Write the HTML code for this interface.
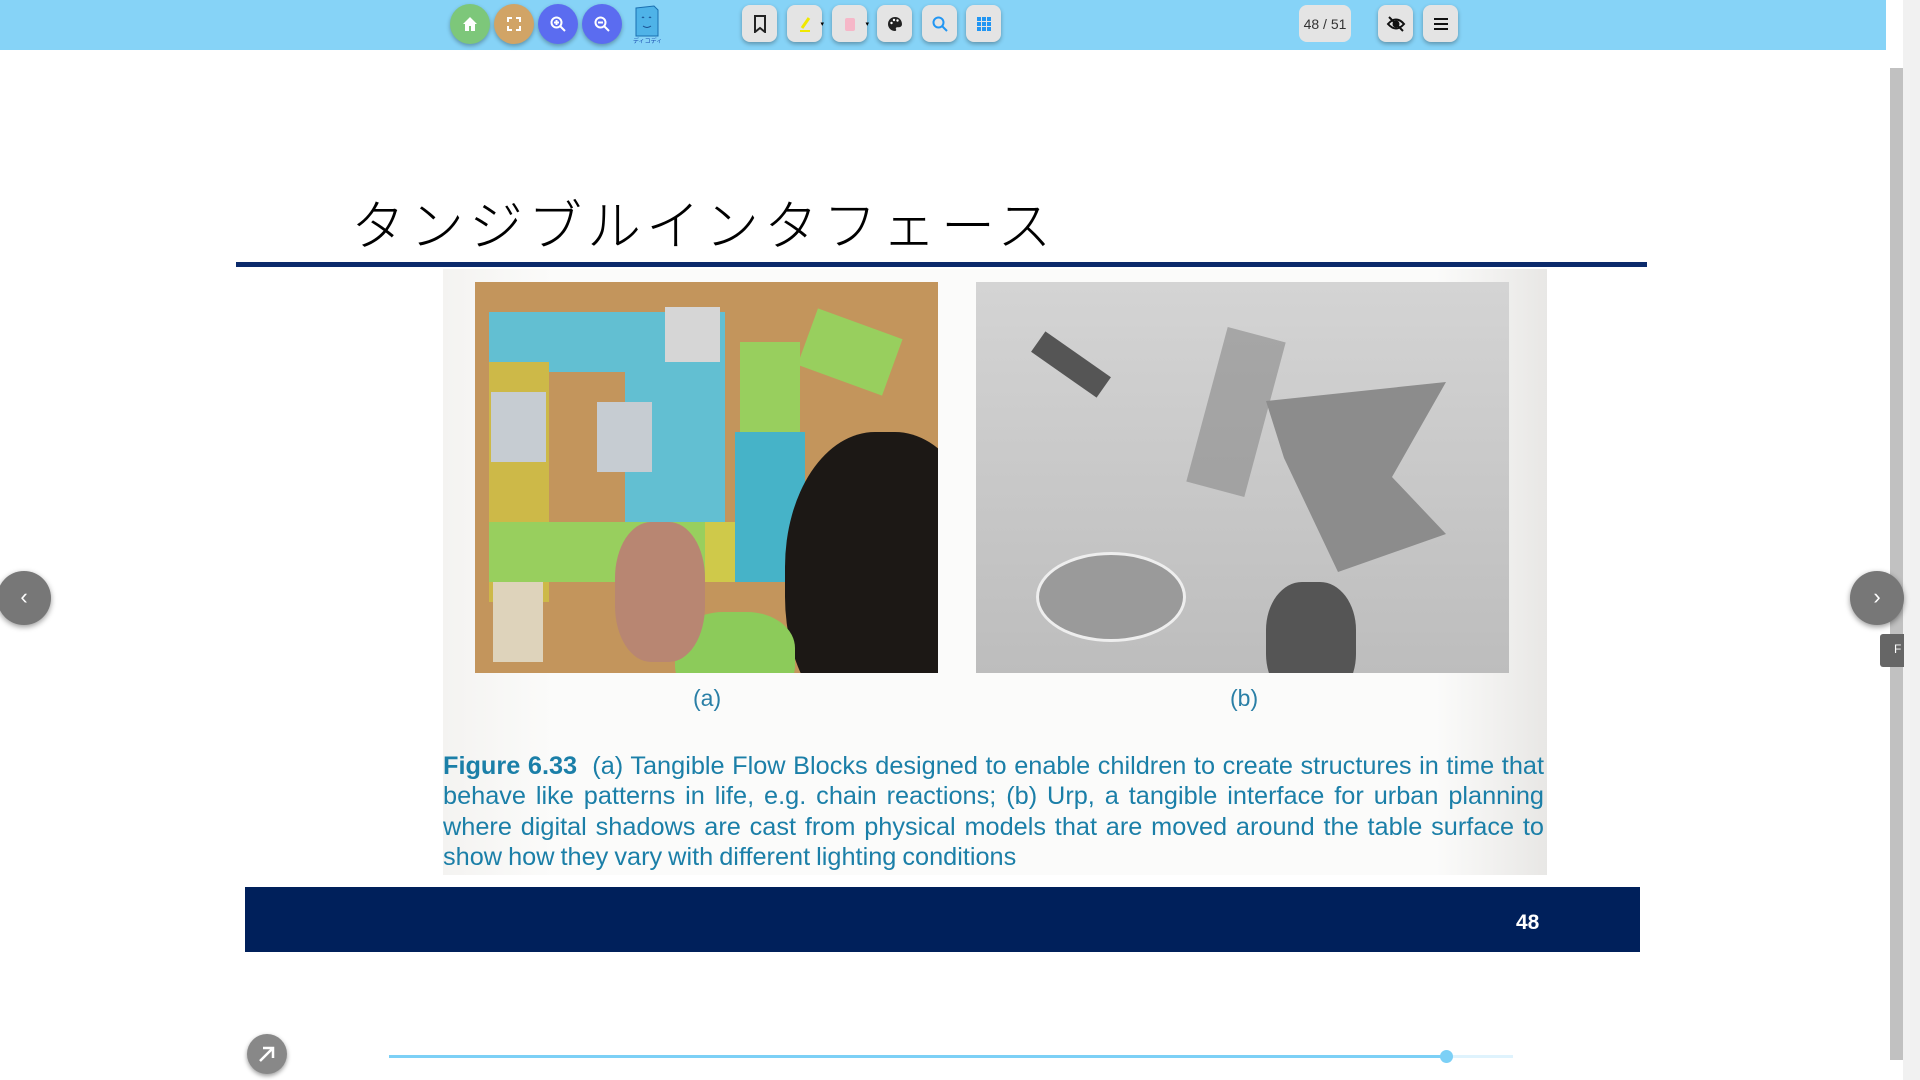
<!DOCTYPE html>
<html><head><meta charset="utf-8"><style>
*{margin:0;padding:0;box-sizing:border-box}
body{width:1920px;height:1080px;background:#fff;position:relative;overflow:hidden;font-family:"Liberation Sans","Noto Sans CJK JP",sans-serif}
.tb{position:absolute;left:0;top:0;width:1886px;height:50px;background:#86d3f7}
.c{position:absolute;top:4px;width:40px;height:40px;border-radius:50%;box-shadow:0 2px 4px rgba(0,0,0,.3);display:flex;align-items:center;justify-content:center}
.s{position:absolute;top:5px;width:35px;height:37px;border-radius:8px;background:#e4e4e4;box-shadow:0 2px 4px rgba(0,0,0,.3);display:flex;align-items:center;justify-content:center}
.abs{position:absolute}
</style></head><body>
<div class="abs" style="left:1886px;top:0;width:34px;height:1080px;background:#fff"></div>
<div class="abs" style="left:1903px;top:0;width:17px;height:1080px;background:#f1f1f1"></div>
<div class="abs" style="left:1890px;top:68px;width:13px;height:992px;background:#c1c1c1"></div>
<div class="tb">
 <div class="c" style="left:450px;background:#7dc77a"><svg width="18" height="18" viewBox="0 0 18 18"><path d="M9 2L2 9h2v7h4v-5h2v5h4V9h2z" fill="#fff"/></svg></div>
 <div class="c" style="left:494px;background:#d1a466"><svg width="16" height="16" viewBox="0 0 16 16" fill="none" stroke="#fff" stroke-width="2"><path d="M2 6V2h4M10 2h4v4M14 10v4h-4M6 14H2v-4"/></svg></div>
 <div class="c" style="left:538px;background:#5b6cf0"><svg width="18" height="18" viewBox="0 0 18 18" fill="none" stroke="#fff" stroke-width="2"><circle cx="7.5" cy="7.5" r="5"/><path d="M11 11l5 5M5 7.5h5M7.5 5v5"/></svg></div>
 <div class="c" style="left:582px;background:#5b6cf0"><svg width="18" height="18" viewBox="0 0 18 18" fill="none" stroke="#fff" stroke-width="2"><circle cx="7.5" cy="7.5" r="5"/><path d="M11 11l5 5M5 7.5h5"/></svg></div>
 <div class="abs" style="left:632px;top:4px;width:30px;height:40px"><svg width="30" height="40" viewBox="0 0 30 40"><path d="M4 4l18-2 4 4v26H4z" fill="#4fb3e8" stroke="#1a6fb0"/><path d="M10 14q1-2 2 0M17 14q1-2 2 0M11 22q4 3 8 0" stroke="#1a4f90" fill="none"/><text x="1" y="39" font-size="6" fill="#1a4fb0">ディコディコ</text></svg></div>
 <div class="s" style="left:742px"><svg width="14" height="18" viewBox="0 0 14 18"><path d="M2 1h10v16l-5-4-5 4z" fill="none" stroke="#222" stroke-width="2"/></svg></div>
 <div class="s" style="left:787px"><svg width="14" height="18"><path d="M4 13l7-10" stroke="#f0e800" stroke-width="3"/><path d="M2 16h10" stroke="#f0e800" stroke-width="2"/></svg><span style="position:absolute;right:-2px;top:15px;font-size:7px">▾</span></div>
 <div class="s" style="left:832px"><svg width="12" height="16"><rect x="1" y="2" width="10" height="13" rx="2" fill="#f6b7c8"/></svg><span style="position:absolute;right:-2px;top:15px;font-size:7px">▾</span></div>
 <div class="s" style="left:877px"><svg width="18" height="18" viewBox="0 0 18 18"><path d="M9 2a7 7 0 0 0 0 14c1 0 1.5-.8 1-1.7-.5-1 0-2 1.2-2H13a3 3 0 0 0 3-3C16 5 13 2 9 2z" fill="#222"/><circle cx="5.5" cy="8" r="1.2" fill="#fff"/><circle cx="8" cy="5" r="1.2" fill="#fff"/><circle cx="11.5" cy="5.5" r="1.2" fill="#fff"/></svg></div>
 <div class="s" style="left:922px"><svg width="18" height="18" fill="none" stroke="#2196f3" stroke-width="2"><circle cx="7.5" cy="7.5" r="5"/><path d="M11 11l5 5"/></svg></div>
 <div class="s" style="left:966px"><svg width="16" height="16" fill="#2196f3"><rect x="1" y="1" width="4" height="4"/><rect x="6" y="1" width="4" height="4"/><rect x="11" y="1" width="4" height="4"/><rect x="1" y="6" width="4" height="4"/><rect x="6" y="6" width="4" height="4"/><rect x="11" y="6" width="4" height="4"/><rect x="1" y="11" width="4" height="4"/><rect x="6" y="11" width="4" height="4"/><rect x="11" y="11" width="4" height="4"/></svg></div>
 <div class="s" style="left:1299px;width:52px;font-size:14px;color:#333;box-shadow:none">48 / 51</div>
 <div class="s" style="left:1378px"><svg width="20" height="18" viewBox="0 0 20 18" fill="none" stroke="#111" stroke-width="2"><path d="M2 9q8-9 16 0q-8 9-16 0z"/><circle cx="10" cy="9" r="2.5" fill="#111"/><path d="M3 2l14 14"/></svg></div>
 <div class="s" style="left:1423px"><svg width="16" height="14" fill="#111"><rect x="1" y="1" width="14" height="2"/><rect x="1" y="6" width="14" height="2"/><rect x="1" y="11" width="14" height="2"/></svg></div>
</div>

<div class="abs" style="left:351px;top:190px;font-size:54px;letter-spacing:5px;color:#000;font-family:'Noto Sans CJK JP',sans-serif;font-weight:300;line-height:64px">タンジブルインタフェース</div>
<div class="abs" style="left:236px;top:262px;width:1411px;height:5px;background:#0b2a6b"></div>

<div class="abs" style="left:443px;top:269px;width:1104px;height:606px;background:linear-gradient(90deg,#f4f3f1,#fbfbfa 10%,#fbfbfa 90%,#e8e7e5)"></div>
<div class="abs" style="left:475px;top:282px;width:463px;height:391px;background:#c3955c;overflow:hidden">
 <div class="abs" style="left:14px;top:30px;width:200px;height:60px;background:#62bfd2"></div>
 <div class="abs" style="left:150px;top:30px;width:100px;height:240px;background:#62bfd2"></div>
 <div class="abs" style="left:14px;top:80px;width:60px;height:240px;background:#cdb948"></div>
 <div class="abs" style="left:14px;top:240px;width:300px;height:60px;background:#98cf5e"></div>
 <div class="abs" style="left:230px;top:240px;width:100px;height:60px;background:#cfc94a"></div>
 <div class="abs" style="left:265px;top:60px;width:60px;height:240px;background:#98cf5e"></div>
 <div class="abs" style="left:260px;top:150px;width:70px;height:150px;background:#46b3c8"></div>
 <div class="abs" style="left:330px;top:40px;width:90px;height:60px;background:#98cf5e;transform:rotate(20deg)"></div>
 <div class="abs" style="left:16px;top:110px;width:55px;height:70px;background:#c6ccd2"></div>
 <div class="abs" style="left:122px;top:120px;width:55px;height:70px;background:#c6ccd2"></div>
 <div class="abs" style="left:190px;top:25px;width:55px;height:55px;background:#d6d6d6"></div>
 <div class="abs" style="left:18px;top:300px;width:50px;height:80px;background:#ded3bb"></div>
 <div class="abs" style="left:310px;top:150px;width:200px;height:300px;border-radius:45%;background:#1c1815"></div>
 <div class="abs" style="left:200px;top:330px;width:120px;height:90px;border-radius:40%;background:#8ccb5a"></div>
 <div class="abs" style="left:140px;top:240px;width:90px;height:140px;border-radius:40%;background:#b88672"></div>
</div>
<div class="abs" style="left:976px;top:282px;width:533px;height:391px;background:linear-gradient(180deg,#d4d4d4,#bdbdbd);overflow:hidden">
 <div class="abs" style="left:60px;top:270px;width:150px;height:90px;border-radius:50%;background:#9a9a9a;border:3px solid #eee"></div>
 <div class="abs" style="left:230px;top:50px;width:60px;height:160px;background:#888;opacity:.6;transform:rotate(15deg)"></div>
 <div class="abs" style="left:290px;top:100px;width:180px;height:190px;background:#8c8c8c;clip-path:polygon(0 10%,100% 0,70% 50%,100% 80%,40% 100%,10% 40%)"></div>
 <div class="abs" style="left:290px;top:300px;width:90px;height:120px;border-radius:40%;background:#555"></div>
 <div class="abs" style="left:55px;top:70px;width:80px;height:25px;background:#555;transform:rotate(35deg)"></div>
</div>
<div class="abs" style="left:693px;top:685px;font-size:23px;color:#2a7fa6">(a)</div>
<div class="abs" style="left:1230px;top:685px;font-size:23px;color:#2a7fa6">(b)</div>
<div class="abs" style="left:443px;top:751px;width:1101px;font-size:25.3px;line-height:30.3px;color:#1b7fa8;text-align:justify;text-align-last:left;word-spacing:-1px"><b>Figure 6.33</b>&nbsp; (a) Tangible Flow Blocks designed to enable children to create structures in time that behave like patterns in life, e.g. chain reactions; (b) Urp, a tangible interface for urban planning where digital shadows are cast from physical models that are moved around the table surface to show how they vary with different lighting conditions</div>

<div class="abs" style="left:245px;top:887px;width:1395px;height:65px;background:#00205b"></div>
<div class="abs" style="left:1516px;top:911px;color:#fff;font-weight:bold;font-size:21px">48</div>

<div class="abs" style="left:-3px;top:571px;width:54px;height:54px;border-radius:50%;background:#777;box-shadow:0 2px 6px rgba(0,0,0,.4);color:#fff;font-size:22px;text-align:center;line-height:52px">‹</div>
<div class="abs" style="left:1850px;top:571px;width:54px;height:54px;border-radius:50%;background:#777;box-shadow:0 2px 6px rgba(0,0,0,.4);color:#fff;font-size:22px;text-align:center;line-height:52px">›</div>
<div class="abs" style="left:1880px;top:634px;width:24px;height:33px;background:#666;border-radius:3px 0 0 3px;color:#fff;font-size:12px;padding:8px 0 0 14px">F</div>
<div class="abs" style="left:247px;top:1034px;width:40px;height:40px;border-radius:50%;background:#888;box-shadow:0 2px 5px rgba(0,0,0,.4)"><svg width="40" height="40"><path d="M13 27l13-13M16 14h10v10" stroke="#fff" stroke-width="2.5" fill="none"/></svg></div>
<div class="abs" style="left:389px;top:1055px;width:1124px;height:3px;background:#dff3fd"></div>
<div class="abs" style="left:389px;top:1055px;width:1058px;height:3px;background:#7cd0f6"></div>
<div class="abs" style="left:1440px;top:1050px;width:13px;height:13px;border-radius:50%;background:#7cd0f6"></div>
</body></html>
